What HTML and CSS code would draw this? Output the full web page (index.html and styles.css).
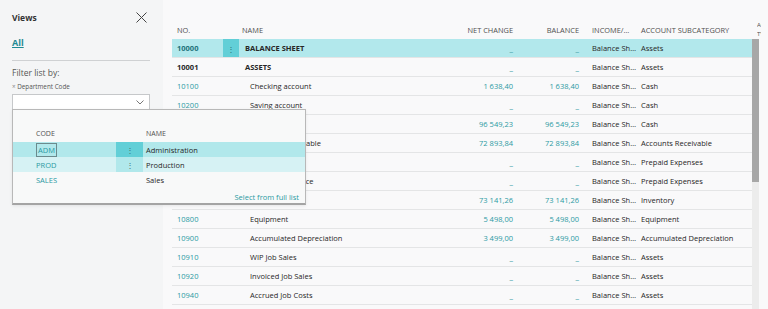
FILE: index.html
```html
<!DOCTYPE html>
<html>
<head>
    <title>Chart of Accounts</title>
    <link rel="stylesheet" href="styles.css">
</head>
<body>
    <div class="page">
        <aside class="views">
            <div class="views-head">
                <span class="views-title">Views</span>
                <svg class="close" width="11" height="11" viewBox="0 0 11 11">
                    <path d="M0.5 0.5 L10.5 10.5 M10.5 0.5 L0.5 10.5" stroke="#444" stroke-width="1" fill="none"/>
                </svg>
            </div>
            <a class="view-all">All</a>
            <div class="divider"></div>
            <div class="filter-label">Filter list by:</div>
            <div class="filter-field"><span class="remove">&times;</span> Department Code</div>
            <div class="select">
                <svg class="chevron" width="8" height="5" viewBox="0 0 8 5">
                    <path d="M0.5 0.5 L4 4 L7.5 0.5" stroke="#777" stroke-width="1" fill="none"/>
                </svg>
            </div>

            <div class="lookup">
                <div class="lk-row lk-head">
                    <span class="lk-code">CODE</span>
                    <span class="lk-dots"></span>
                    <span class="lk-name">NAME</span>
                </div>
                <div class="lk-row selected">
                    <span class="lk-code"><span class="focus">ADM</span></span>
                    <span class="lk-dots">&#8942;</span>
                    <span class="lk-name">Administration</span>
                </div>
                <div class="lk-row hover">
                    <span class="lk-code">PROD</span>
                    <span class="lk-dots">&#8942;</span>
                    <span class="lk-name">Production</span>
                </div>
                <div class="lk-row">
                    <span class="lk-code">SALES</span>
                    <span class="lk-dots"></span>
                    <span class="lk-name">Sales</span>
                </div>
                <div class="lk-foot">Select from full list</div>
            </div>
        </aside>

        <main class="list">
            <div class="thead">
                <span class="c-no">NO.</span>
                <span class="c-dots"></span>
                <span class="c-name">NAME</span>
                <span class="c-num">NET CHANGE</span>
                <span class="c-num c-bal">BALANCE</span>
                <span class="c-inc">INCOME/BALANCE</span>
                <span class="c-sub">ACCOUNT SUBCATEGORY</span>
                <span class="c-type">ACCOUNT TYPE</span>
            </div>
            <div class="tbody">
                <div class="rows">
                    <div class="row current">
                        <span class="c-no">10000</span>
                        <span class="c-dots">&#8942;</span>
                        <span class="c-name">BALANCE SHEET</span>
                        <span class="c-num empty">_</span>
                        <span class="c-num c-bal empty">_</span>
                        <span class="c-inc">Balance Sheet</span>
                        <span class="c-sub">Assets</span>
                    </div>
                    <div class="row heading">
                        <span class="c-no">10001</span>
                        <span class="c-dots"></span>
                        <span class="c-name">ASSETS</span>
                        <span class="c-num empty">_</span>
                        <span class="c-num c-bal empty">_</span>
                        <span class="c-inc">Balance Sheet</span>
                        <span class="c-sub">Assets</span>
                    </div>
                    <div class="row">
                        <span class="c-no">10100</span>
                        <span class="c-dots"></span>
                        <span class="c-name">Checking account</span>
                        <span class="c-num">1 638,40</span>
                        <span class="c-num c-bal">1 638,40</span>
                        <span class="c-inc">Balance Sheet</span>
                        <span class="c-sub">Cash</span>
                    </div>
                    <div class="row">
                        <span class="c-no">10200</span>
                        <span class="c-dots"></span>
                        <span class="c-name">Saving account</span>
                        <span class="c-num empty">_</span>
                        <span class="c-num c-bal empty">_</span>
                        <span class="c-inc">Balance Sheet</span>
                        <span class="c-sub">Cash</span>
                    </div>
                    <div class="row">
                        <span class="c-no">10300</span>
                        <span class="c-dots"></span>
                        <span class="c-name">Petty Cash</span>
                        <span class="c-num">96 549,23</span>
                        <span class="c-num c-bal">96 549,23</span>
                        <span class="c-inc">Balance Sheet</span>
                        <span class="c-sub">Cash</span>
                    </div>
                    <div class="row">
                        <span class="c-no">10400</span>
                        <span class="c-dots"></span>
                        <span class="c-name">Accounts Receivable</span>
                        <span class="c-num">72 893,84</span>
                        <span class="c-num c-bal">72 893,84</span>
                        <span class="c-inc">Balance Sheet</span>
                        <span class="c-sub">Accounts Receivable</span>
                    </div>
                    <div class="row">
                        <span class="c-no">10500</span>
                        <span class="c-dots"></span>
                        <span class="c-name">Prepaid Rent</span>
                        <span class="c-num empty">_</span>
                        <span class="c-num c-bal empty">_</span>
                        <span class="c-inc">Balance Sheet</span>
                        <span class="c-sub">Prepaid Expenses</span>
                    </div>
                    <div class="row">
                        <span class="c-no">10600</span>
                        <span class="c-dots"></span>
                        <span class="c-name">Prepaid Insurance</span>
                        <span class="c-num empty">_</span>
                        <span class="c-num c-bal empty">_</span>
                        <span class="c-inc">Balance Sheet</span>
                        <span class="c-sub">Prepaid Expenses</span>
                    </div>
                    <div class="row">
                        <span class="c-no">10700</span>
                        <span class="c-dots"></span>
                        <span class="c-name">Inventory</span>
                        <span class="c-num">73 141,26</span>
                        <span class="c-num c-bal">73 141,26</span>
                        <span class="c-inc">Balance Sheet</span>
                        <span class="c-sub">Inventory</span>
                    </div>
                    <div class="row">
                        <span class="c-no">10800</span>
                        <span class="c-dots"></span>
                        <span class="c-name">Equipment</span>
                        <span class="c-num">5 498,00</span>
                        <span class="c-num c-bal">5 498,00</span>
                        <span class="c-inc">Balance Sheet</span>
                        <span class="c-sub">Equipment</span>
                    </div>
                    <div class="row">
                        <span class="c-no">10900</span>
                        <span class="c-dots"></span>
                        <span class="c-name">Accumulated Depreciation</span>
                        <span class="c-num">3 499,00</span>
                        <span class="c-num c-bal">3 499,00</span>
                        <span class="c-inc">Balance Sheet</span>
                        <span class="c-sub">Accumulated Depreciation</span>
                    </div>
                    <div class="row">
                        <span class="c-no">10910</span>
                        <span class="c-dots"></span>
                        <span class="c-name">WIP Job Sales</span>
                        <span class="c-num empty">_</span>
                        <span class="c-num c-bal empty">_</span>
                        <span class="c-inc">Balance Sheet</span>
                        <span class="c-sub">Assets</span>
                    </div>
                    <div class="row">
                        <span class="c-no">10920</span>
                        <span class="c-dots"></span>
                        <span class="c-name">Invoiced Job Sales</span>
                        <span class="c-num empty">_</span>
                        <span class="c-num c-bal empty">_</span>
                        <span class="c-inc">Balance Sheet</span>
                        <span class="c-sub">Assets</span>
                    </div>
                    <div class="row">
                        <span class="c-no">10940</span>
                        <span class="c-dots"></span>
                        <span class="c-name">Accrued Job Costs</span>
                        <span class="c-num empty">_</span>
                        <span class="c-num c-bal empty">_</span>
                        <span class="c-inc">Balance Sheet</span>
                        <span class="c-sub">Assets</span>
                    </div>
                </div>
                <div class="scrollbar"><div class="thumb"></div></div>
            </div>
        </main>
    </div>
</body>
</html>
```

FILE: styles.css
```css
body {
    margin: 0;
    font-family: "Open Sans", "Noto Sans", sans-serif;
    font-size: 7.5px;
    color: #262626;
    background-color: #f9f9fa;
    overflow: hidden;
}
.page {
    display: flex;
    height: 309px;
}

/* Views pane */
.views {
    position: relative;
    z-index: 2;
    width: 163px;
    flex: none;
    box-sizing: border-box;
    padding: 10px 13px 0 12px;
    background-color: #f4f5f6;
}
.views-head {
    display: flex;
    justify-content: space-between;
    align-items: center;
    height: 14px;
}
.views-title {
    font-weight: 700;
    font-size: 8.5px;
    color: #333;
}
.close {
    margin-right: 3px;
}
.view-all {
    display: inline-block;
    margin-top: 12px;
    font-weight: 700;
    font-size: 9px;
    color: #1e8a93;
    text-decoration: underline;
}
.divider {
    margin-top: 11px;
    border-top: 1px solid #cfd1d3;
}
.filter-label {
    margin-top: 6px;
    font-size: 8.5px;
    color: #555;
}
.filter-field {
    margin-top: 4px;
    font-size: 6.3px;
    color: #555;
}
.remove {
    color: #888;
}
.select {
    display: flex;
    justify-content: flex-end;
    align-items: center;
    height: 14px;
    margin-top: 3px;
    padding-right: 5px;
    border: 1px solid #c6c8ca;
    background-color: #fff;
}

/* lookup dropdown */
.lookup {
    position: absolute;
    top: 109px;
    left: 12px;
    width: 294px;
    box-sizing: border-box;
    padding-top: 15px;
    border: 1px solid #b8b8b8;
    border-bottom: 2px solid #a4a4a4;
    background-color: #f8f9f9;
    box-shadow: 0 1px 3px rgba(0, 0, 0, 0.08);
}
.lk-row {
    display: flex;
    align-items: center;
    height: 15px;
}
.lk-head {
    height: 17px;
    font-size: 7px;
    color: #505050;
}
.lk-code {
    width: 103px;
    box-sizing: border-box;
    padding-left: 23px;
    color: #2b9aa3;
}
.lk-head .lk-code {
    color: #505050;
}
.lk-dots {
    width: 27px;
    align-self: stretch;
    display: flex;
    align-items: center;
    justify-content: center;
    color: #3d6f74;
    font-size: 8px;
}
.lk-name {
    padding-left: 3px;
}
.lk-row.selected {
    background-color: #b1e8eb;
}
.lk-row.selected .lk-dots {
    background-color: #62cfd7;
}
.lk-row.hover {
    background-color: #d6f2f4;
}
.lk-row.hover .lk-dots {
    background-color: #b1e8eb;
}
.focus {
    padding: 1px 1px;
    border: 1px solid #6b8a8d;
}
.lk-foot {
    height: 16px;
    box-sizing: border-box;
    padding: 4px 6px 0 0;
    line-height: 12px;
    text-align: right;
    color: #2b9aa3;
}

/* list */
.list {
    flex: 1;
    padding: 20px 0 0 9px;
    min-width: 0;
}
.thead, .row {
    display: grid;
    grid-template-columns: 51px 16px 218px 60px 67px 55px 113px;
    align-items: center;
}
.thead {
    grid-template-columns: 51px 16px 218px 60px 67px 55px 113px 5px 1fr;
    height: 19px;
    font-size: 7.4px;
    color: #505050;
    text-transform: uppercase;
}
.thead > span {
    white-space: nowrap;
    overflow: hidden;
}
.thead .c-name {
    padding-left: 3px;
}
.thead .c-inc {
    padding-right: 6px;
}
.tbody {
    display: flex;
}
.rows {
    width: 580px;
}
.row {
    height: 18px;
    border-bottom: 1px solid #e4e5e6;
}
.row > span {
    white-space: nowrap;
    overflow: hidden;
}
.c-no {
    padding-left: 5px;
}
.row .c-no {
    color: #2b9aa3;
}
.c-dots {
    align-self: stretch;
    display: flex;
    align-items: center;
    justify-content: center;
    color: #2f6d73;
    font-size: 8px;
}
.c-name {
    padding-left: 11px;
}
.c-num {
    text-align: right;
    padding-right: 4px;
    color: #2b9aa3;
}
.thead .c-num {
    color: #505050;
}
.c-bal {
    padding-right: 5px;
}
.c-num.empty {
    color: #4fa9b0;
    font-size: 8px;
    line-height: 14px;
    font-weight: 600;
}
.c-inc {
    padding-left: 8px;
    overflow: hidden;
    white-space: nowrap;
    text-overflow: ellipsis;
}
.c-sub {
    padding-left: 2px;
}
.c-type {
    grid-column: 9;
    width: 4px;
    font-size: 6px;
    line-height: 9px;
    word-spacing: 20px;
    white-space: normal !important;
    align-self: center;
}
.row.current {
    background-color: #b2e8ec;
}
.row.current .c-dots {
    background-color: #62cfd7;
}
.row.current .c-no {
    color: #1d727a;
    font-weight: 700;
}
.row.current .c-name, .row.heading .c-name {
    font-weight: 700;
    padding-left: 6px;
}
.row.heading .c-no {
    color: #262626;
    font-weight: 700;
}
.scrollbar {
    width: 7px;
    height: 270px;
    background-color: #ececec;
}
.thumb {
    height: 143px;
    background-color: #a7a7a7;
}
```
